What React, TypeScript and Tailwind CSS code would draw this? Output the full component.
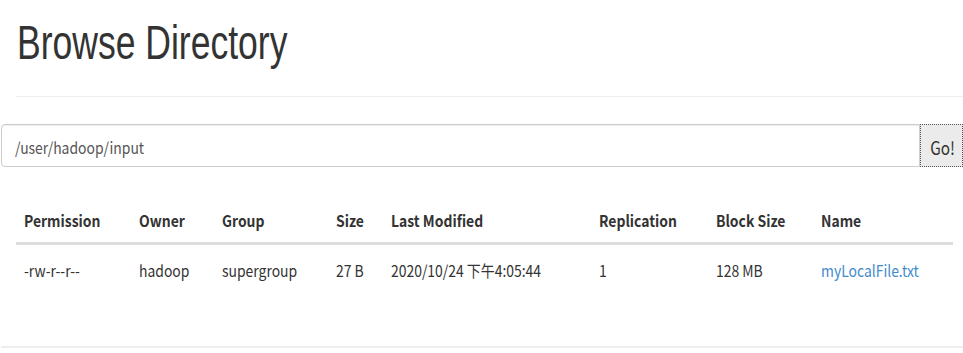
import React from "react";

const cols = "grid grid-cols-[115px_83px_114px_55px_208px_117px_105px_140px]";
const cjk = { fontFamily: '"Noto Sans CJK SC", "Noto Sans", sans-serif' };

function T({ children, className = "" }: { children: React.ReactNode; className?: string }) {
  return (
    <span className={"inline-block origin-left scale-x-[0.87] whitespace-nowrap " + className}>
      {children}
    </span>
  );
}

const headers = ["Permission", "Owner", "Group", "Size", "Last Modified", "Replication", "Block Size", "Name"];
const row = ["-rw-r--r--", "hadoop", "supergroup", "27 B", "2020/10/24 下午4:05:44", "1", "128 MB", "myLocalFile.txt"];

export default function App() {
  return (
    <div className="w-[963px] h-[353px] bg-white overflow-hidden text-[#333]">
      <div className="pl-[16px]">
        <div className="pt-[19px]">
          <h1
            className="text-[48px] leading-[48px] font-normal pl-[1px]"
            style={{ fontFamily: '"Liberation Sans", Arial, sans-serif' }}
          >
            <span className="inline-block origin-left scale-x-[0.74] whitespace-nowrap">Browse Directory</span>
          </h1>
        </div>
        <div className="h-px bg-[#eee] mt-[29px]" />
      </div>

      <div className="flex mt-[27px] pl-[1px] h-[43px]" style={cjk}>
        <div className="flex-1 flex items-center border border-[#ccc] rounded-l-[4px] shadow-[inset_0_1px_1px_rgba(0,0,0,0.075)] pl-[13px] pt-[3px] text-[16px] leading-[24px] text-[#555]">
          <T>/user/hadoop/input</T>
        </div>
        <div className="w-[43px] flex items-center justify-center bg-[#ebebeb] border border-dotted border-[#555] pl-[3px] pt-[2px] text-[18px] leading-[24px] text-[#333]">
          <span className="inline-block origin-center scale-x-[0.85]">Go!</span>
        </div>
      </div>

      <div className="mt-[33px] ml-[16px] w-[937px]" style={cjk}>
        <div className={cols + " border-b-[3px] border-[#ddd] pt-[8px] pb-[10px] text-[16px] leading-[24px] font-bold"}>
          {headers.map((h) => (
            <div key={h} className="px-[8px]">
              <T>{h}</T>
            </div>
          ))}
        </div>
        <div className={cols + " pt-[13px] pb-[8px] text-[16px] leading-[24px]"}>
          {row.map((c, i) => (
            <div key={i} className="px-[8px]">
              {i === 7 ? <T className="text-[#428bca]">{c}</T> : <T>{c}</T>}
            </div>
          ))}
        </div>
      </div>

      <div className="h-[2px] bg-[#eee] mt-[56px] ml-[1px]" />
    </div>
  );
}
